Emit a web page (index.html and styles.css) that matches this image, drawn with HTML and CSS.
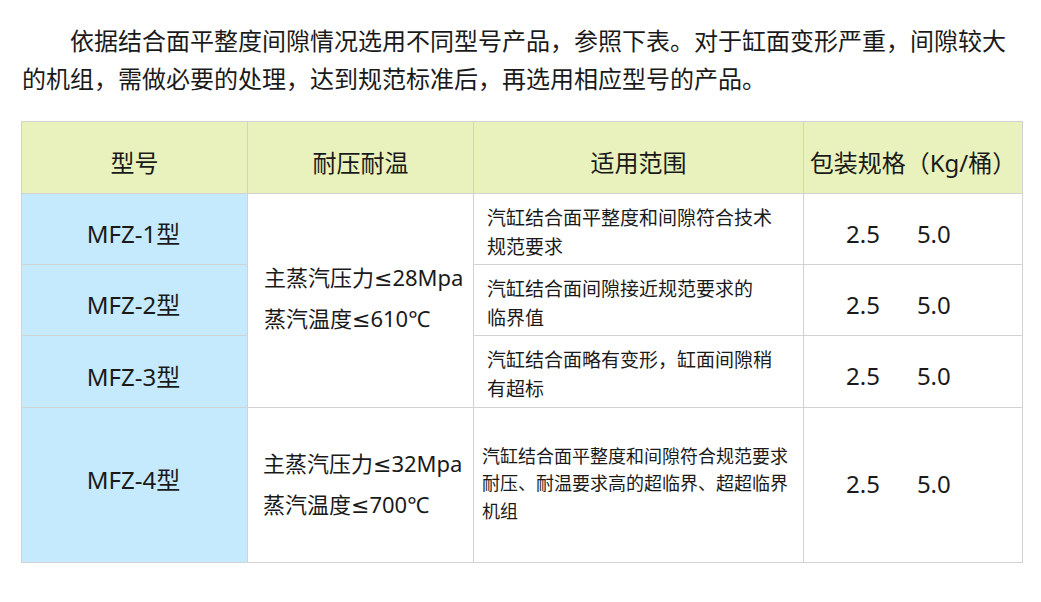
FILE: index.html
```html
<!DOCTYPE html>
<html lang="zh-CN">
<head>
<meta charset="utf-8">
<title>产品选型</title>
<link rel="stylesheet" href="styles.css">
</head>
<body>
<div class="page">
  <p class="intro">依据结合面平整度间隙情况选用不同型号产品，参照下表。对于缸面变形严重，间隙较大的机组，需做必要的处理，达到规范标准后，再选用相应型号的产品。</p>
  <table class="spec">
    <colgroup>
      <col class="c1"><col class="c2"><col class="c3"><col class="c4">
    </colgroup>
    <thead>
      <tr class="head">
        <th>型号</th>
        <th>耐压耐温</th>
        <th>适用范围</th>
        <th>包装规格（Kg/桶）</th>
      </tr>
    </thead>
    <tbody>
      <tr class="r1">
        <td class="model">MFZ-1型</td>
        <td class="cond" rowspan="3">主蒸汽压力≤28Mpa<br>蒸汽温度≤610℃</td>
        <td class="scope">汽缸结合面平整度和间隙符合技术<br>规范要求</td>
        <td class="pack"><span>2.5</span><span>5.0</span></td>
      </tr>
      <tr class="r2">
        <td class="model">MFZ-2型</td>
        <td class="scope">汽缸结合面间隙接近规范要求的<br>临界值</td>
        <td class="pack"><span>2.5</span><span>5.0</span></td>
      </tr>
      <tr class="r3">
        <td class="model">MFZ-3型</td>
        <td class="scope">汽缸结合面略有变形，缸面间隙稍<br>有超标</td>
        <td class="pack"><span>2.5</span><span>5.0</span></td>
      </tr>
      <tr class="r4">
        <td class="model">MFZ-4型</td>
        <td class="cond">主蒸汽压力≤32Mpa<br>蒸汽温度≤700℃</td>
        <td class="scope small">汽缸结合面平整度和间隙符合规范要求<br>耐压、耐温要求高的超临界、超超临界<br>机组</td>
        <td class="pack"><span>2.5</span><span>5.0</span></td>
      </tr>
    </tbody>
  </table>
</div>
</body>
</html>
```

FILE: styles.css
```css
html, body {
  margin: 0;
  padding: 0;
  background: #ffffff;
}

body {
  font-family: "Noto Sans", "Noto Sans CJK SC", sans-serif;
  color: #1a1a1a;
}

.page {
  padding: 22px 19px 0 21px;
}

.intro {
  margin: 0 0 23px 1px;
  font-size: 24px;
  line-height: 38px;
  text-indent: 2em;
  width: 1000px;
}

.spec {
  width: 1001px;
  table-layout: fixed;
  border-collapse: collapse;
  border: 1px solid #dadada;
}

.spec .c1 { width: 226px; }
.spec .c2 { width: 226px; }
.spec .c3 { width: 330px; }
.spec .c4 { width: 219px; }

.spec th,
.spec td {
  border: 1px solid #d2d2d2;
  padding: 0;
  vertical-align: middle;
}

.spec .head {
  height: 72px;
  background: #e9f2bd;
}

.spec .head th {
  font-weight: normal;
  font-size: 24px;
  text-align: center;
  padding-top: 8px;
  white-space: nowrap;
}

.spec .r1, .spec .r2 { height: 71px; }
.spec .r3 { height: 72px; }
.spec .r4 { height: 155px; }

.spec .model {
  background: #c5eafd;
  text-align: center;
  font-size: 24px;
  padding: 7px 2px 0 0;
}

.spec .r4 .model {
  padding: 0 2px 14px 0;
}

.spec .cond {
  font-family: "Noto Sans", "DejaVu Sans", "Noto Sans CJK SC", sans-serif;
  font-size: 22px;
  line-height: 41px;
  padding: 0 0 6px 16px;
  white-space: nowrap;
}

.spec .r4 .cond {
  padding: 0 0 2px 15px;
}

.spec .scope {
  font-size: 19px;
  line-height: 29px;
  padding: 7px 8px 0 13px;
  white-space: nowrap;
}

.spec .scope.small {
  font-size: 18px;
  line-height: 27.5px;
  padding: 0 6px 2px 8px;
}

.spec .pack {
  font-size: 24px;
  padding: 8px 0 0 42px;
  white-space: nowrap;
}

.spec .r4 .pack {
  padding: 0 0 4px 42px;
}

.pack span + span {
  margin-left: 37px;
}
```
